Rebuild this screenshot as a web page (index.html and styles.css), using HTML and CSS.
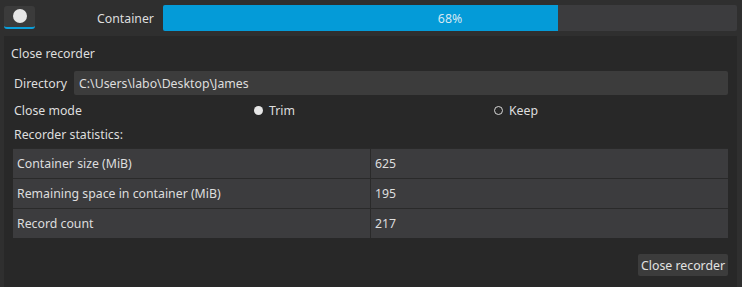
FILE: index.html
```html
<!DOCTYPE html>
<html>
<head>
<meta charset="utf-8">
<link rel="stylesheet" href="styles.css">
</head>
<body>
<div class="app">
  <div class="topbar">
    <div class="toggle"><span class="knob"></span></div>
    <div class="cont-label">Container</div>
    <div class="progress">
      <div class="fill" style="width:68.8%"></div>
      <div class="ptext">68%</div>
    </div>
  </div>
  <div class="panel">
    <div class="title">Close recorder</div>
    <div class="row dir">
      <span class="lbl">Directory</span>
      <div class="input">C:\Users\labo\Desktop\James</div>
    </div>
    <div class="row mode">
      <span class="lbl mode-lbl">Close mode</span>
      <span class="radio r1"><span class="dot on"></span>Trim</span>
      <span class="radio r2"><span class="dot off"></span>Keep</span>
    </div>
    <div class="row stats-lbl">Recorder statistics:</div>
    <div class="table">
      <div class="cell k">Container size (MiB)</div><div class="cell v">625</div>
      <div class="cell k">Remaining space in container (MiB)</div><div class="cell v">195</div>
      <div class="cell k">Record count</div><div class="cell v">217</div>
    </div>
    <div class="footer"><button class="btn">Close recorder</button></div>
  </div>
</div>
</body>
</html>
```
FILE: styles.css
```css
* { box-sizing: border-box; }
html, body { margin: 0; padding: 0; }
body {
  width: 742px; height: 287px; overflow: hidden;
  background: #2f2f2f;
  font-family: "Noto Sans", sans-serif;
  font-size: 12.3px;
  color: #dedede;
}
.app { display: flex; flex-direction: column; height: 287px; }
.topbar {
  display: flex; align-items: center;
  height: 36px; padding: 5px 5px 5px 4px;
}
.toggle {
  width: 31px; height: 23px; margin-top: -2px;
  background: #3b3b3b; border-radius: 3px;
  border-bottom: 2px solid #0a9fdb;
  display: flex; align-items: center; justify-content: center;
}
.knob { width: 14px; height: 14px; border-radius: 50%; background: #e6e6e6; }
.cont-label { margin-left: 62px; width: 66px; }
.progress {
  position: relative; flex: 1; height: 26px;
  background: #3c3c3e; border-radius: 2px; overflow: hidden;
}
.fill { height: 100%; background: #049bd8; }
.ptext {
  position: absolute; inset: 0; display: flex; align-items: center; justify-content: center;
  color: #d6e8f3;
}
.panel {
  flex: 1; margin: 0 5px 0 4px;
  background: #282828;
  padding: 8px 9px 0 7px;
  display: flex; flex-direction: column;
}
.title { height: 22px; line-height: 20px; }
.row { display: flex; align-items: center; padding-left: 3px; }
.dir { margin-top: 5px; height: 24px; }
.lbl { width: 60px; }
.input {
  flex: 1; height: 24px; background: #3c3c3c; border-radius: 2px;
  padding-left: 5px; display: flex; align-items: center;
}
.mode { height: 31px; }
.mode-lbl { width: 240px; }
.radio { display: flex; align-items: center; }
.r1 { width: 240px; }
.dot { width: 9px; height: 9px; border-radius: 50%; margin-right: 6px; }
.dot.on { background: #e6e6e6; }
.dot.off { border: 1.5px solid #d8d8d8; }
.stats-lbl { height: 16px; margin-top: 0; }
.table {
  margin-top: 6px; margin-left: 2px;
  display: grid; grid-template-columns: 357px 1fr;
  background: #2a2a2a; gap: 1px; padding: 1px 0 0 0;
}
.cell { background: #3c3c3e; height: 29px; display: flex; align-items: center; padding-left: 4px; }
.footer { display: flex; justify-content: flex-end; margin-top: 16px; }
.btn {
  font: inherit; color: #e2e2e2; background: #3c3c3c; border: none;
  border-radius: 2px; height: 22px; padding: 0 3px;
}
```
